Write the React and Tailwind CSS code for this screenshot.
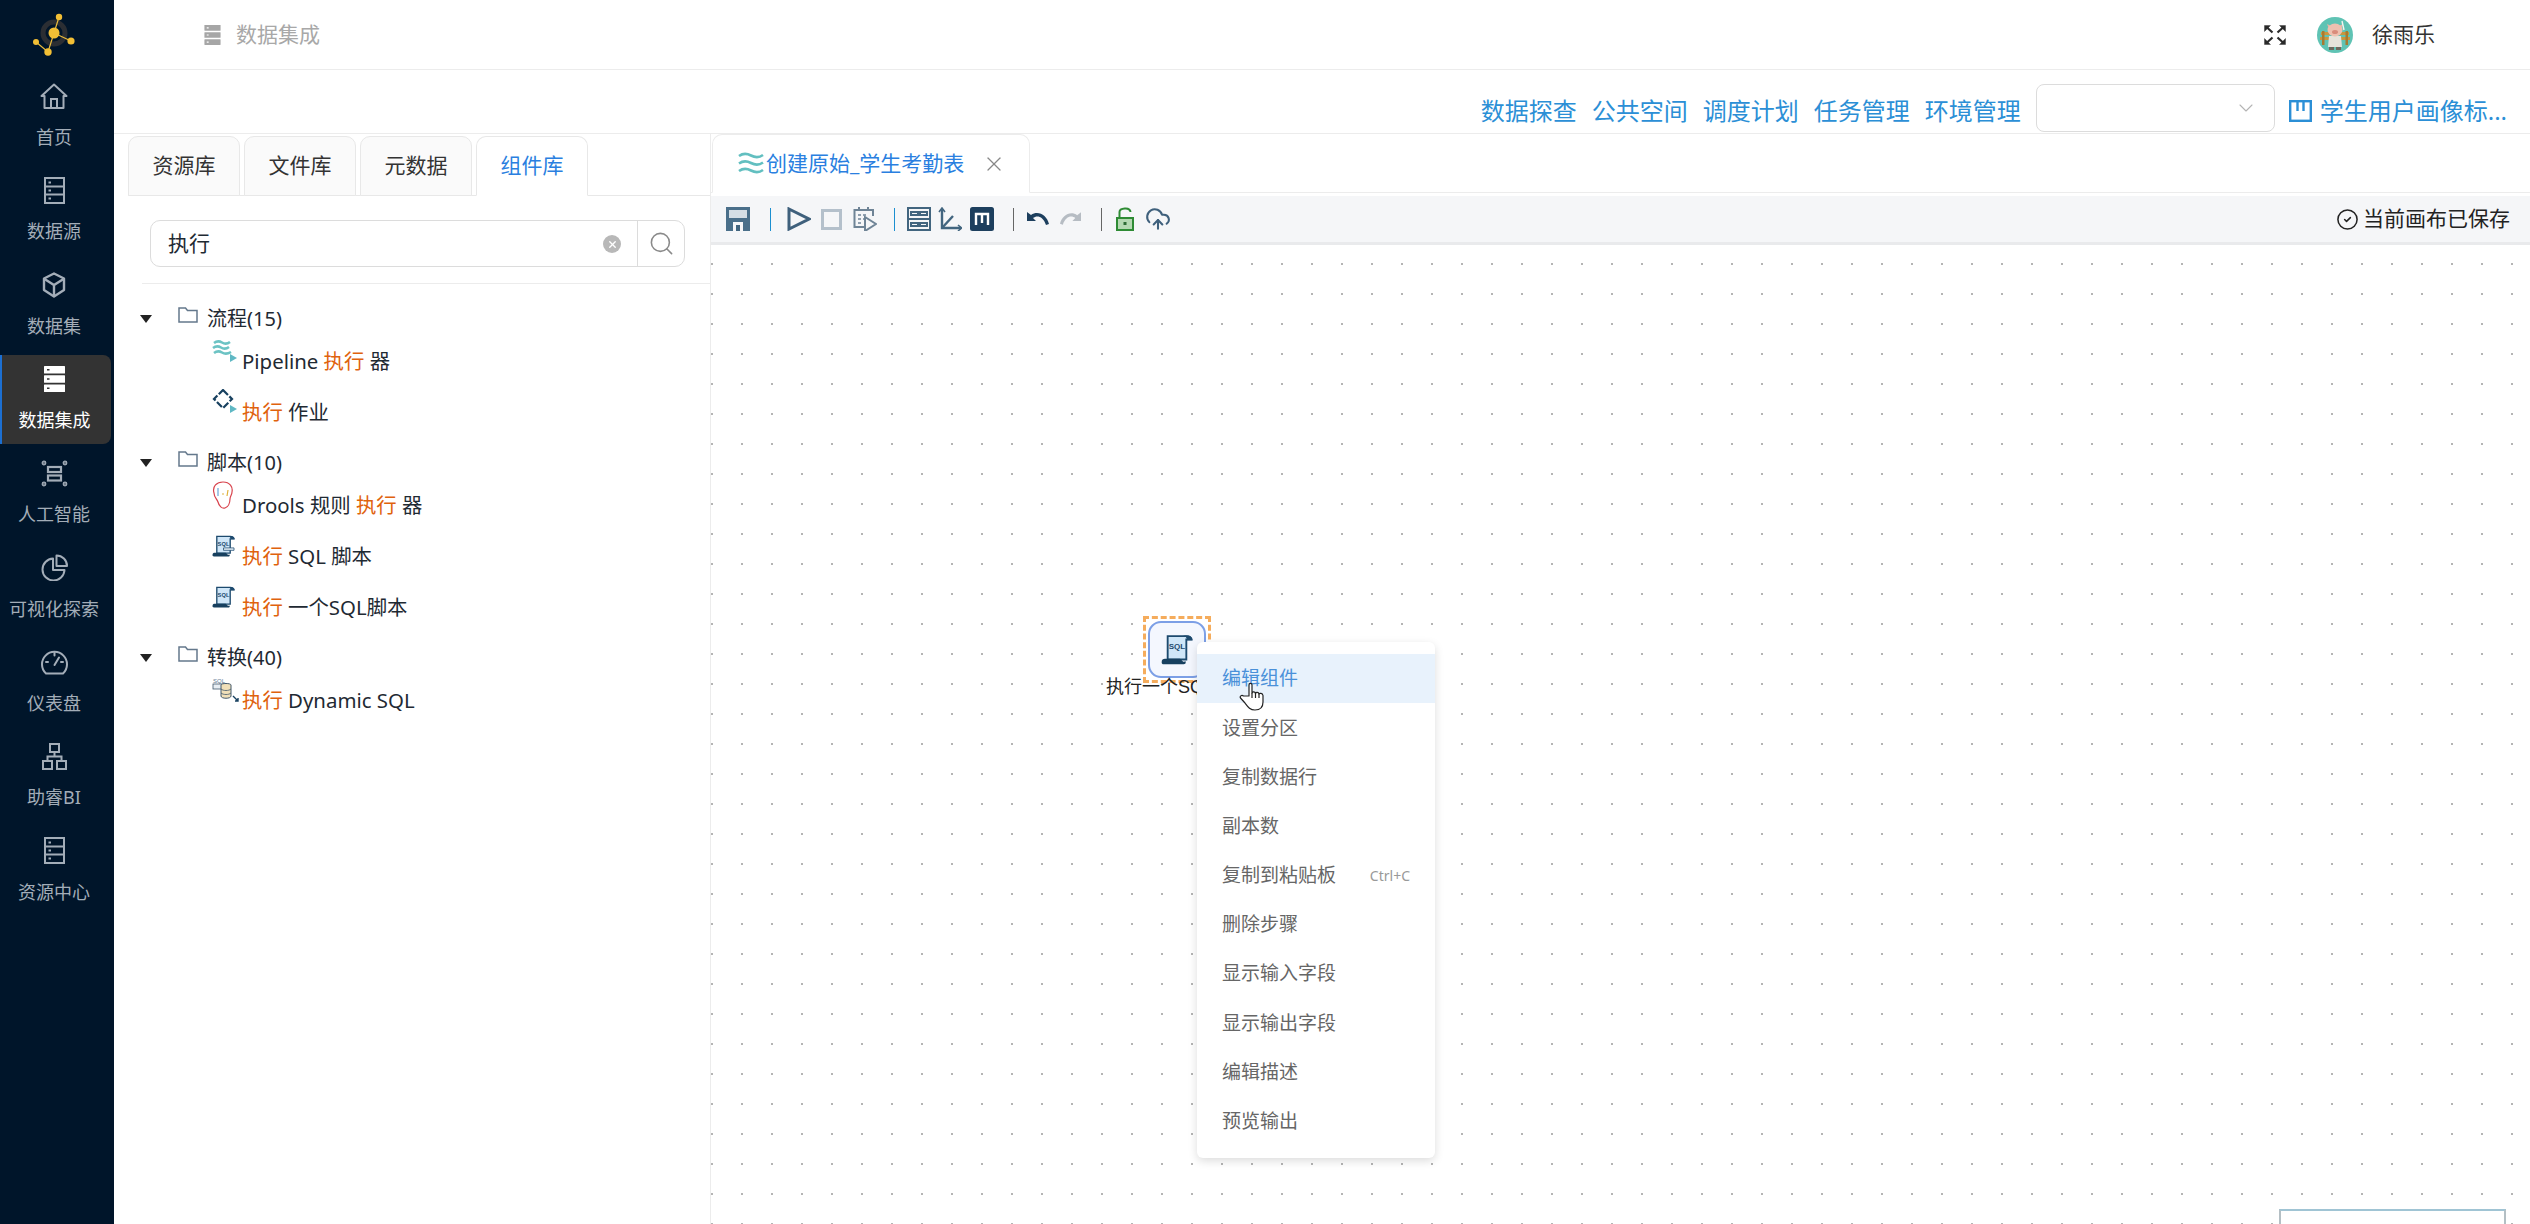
import React from "react";
import { ChevronDown, CircleCheck, CloudUpload, Search, X } from "lucide-react";

const FONT = "font-['Noto_Sans','Noto_Sans_CJK_SC',sans-serif]";

const Logo = () => (
  <svg width="50" height="50" viewBox="0 0 50 50">
    <circle cx="29" cy="24" r="11" fill="none" stroke="#2b2e33" strokeWidth="5" />
    <g stroke="#e9bb3c" strokeWidth="1.2">
      <path d="M29 24L34 8M29 24L46 32M29 24L23 43L11 33" fill="none" />
    </g>
    <g fill="#f2bf35">
      <circle cx="29" cy="24" r="5.5" />
      <circle cx="34" cy="8" r="3.2" />
      <circle cx="46" cy="32" r="3.6" />
      <circle cx="23" cy="43" r="3.7" />
      <circle cx="11" cy="33" r="3" />
    </g>
  </svg>
);

const HomeIcon = () => (
  <svg width="28" height="26" viewBox="0 0 28 26" fill="none" stroke="#a3adb8" strokeWidth="2">
    <path d="M1.5 13L14 1.5L26.5 13H23.5V25H4.5V13Z" strokeLinejoin="round" />
    <path d="M11 25V16H17V25" />
  </svg>
);

const DrawerIcon = () => (
  <svg width="21" height="27" viewBox="0 0 21 27" fill="none" stroke="#a3adb8" strokeWidth="2">
    <rect x="1" y="1" width="19" height="25" />
    <path d="M1 9.5H20M1 17.5H20" />
    <path d="M4.5 5.5H7M4.5 13.5H7M4.5 21.5H7" />
  </svg>
);

const CubeIcon = () => (
  <svg width="24" height="26" viewBox="0 0 24 26" fill="none" stroke="#a3adb8" strokeWidth="2.4">
    <path d="M12 1.5L22 6.5V18L12 24.5L2 18V6.5Z" strokeLinejoin="round" />
    <path d="M2.5 7L12 13L21.5 7M12 13V24" />
  </svg>
);

const ServerIcon = ({ width, height, fill, dot }) => (
  <svg width={width} height={height} viewBox="0 0 21 26">
    <rect x="0" y="0" width="21" height="7.4" rx="0.5" fill={fill} />
    <rect x="0" y="9.3" width="21" height="7.4" rx="0.5" fill={fill} />
    <rect x="0" y="18.6" width="21" height="7.4" rx="0.5" fill={fill} />
    <path d="M3 3.7H5.5M3 13H5.5M3 22.3H5.5" stroke={dot} strokeWidth="1.6" />
  </svg>
);

const AiIcon = () => (
  <svg width="27" height="27" viewBox="0 0 27 27" fill="none" stroke="#a3adb8" strokeWidth="2.2">
    <rect x="7" y="7" width="13" height="5" />
    <rect x="7" y="15.5" width="13" height="5" />
    <g strokeWidth="1.2" fill="#6f7b88">
      <circle cx="3" cy="3" r="1.8" />
      <circle cx="24" cy="3" r="1.8" />
      <circle cx="3" cy="24" r="1.8" />
      <circle cx="24" cy="24" r="1.8" />
    </g>
  </svg>
);

const PieIcon = () => (
  <svg width="27" height="27" viewBox="0 0 27 27" fill="none" stroke="#a3adb8" strokeWidth="2">
    <path d="M12 4.5A11 11 0 1 0 23.5 16H12Z" strokeLinejoin="round" />
    <path d="M15.5 1.5A10.5 10.5 0 0 1 26 12H15.5Z" strokeLinejoin="round" />
  </svg>
);

const GaugeIcon = () => (
  <svg width="27" height="26" viewBox="0 0 27 26" fill="none" stroke="#a3adb8" strokeWidth="2">
    <path d="M5 24.5A12.5 12.5 0 1 1 22 24.5Z" strokeLinejoin="round" />
    <path d="M13.5 16L18 8.5M13.5 4V6.5M5 13H7M20 13H22" strokeLinecap="round" />
  </svg>
);

const OrgIcon = () => (
  <svg width="25" height="27" viewBox="0 0 25 27" fill="none" stroke="#a3adb8" strokeWidth="2">
    <rect x="8" y="1" width="9" height="8" />
    <rect x="1" y="18" width="9" height="8" />
    <rect x="15" y="18" width="9" height="8" />
    <path d="M12.5 9V13.5M5.5 18V13.5H19.5V18" />
  </svg>
);

const menuItems = [
  { label: "首页", icon: <HomeIcon /> },
  { label: "数据源", icon: <DrawerIcon /> },
  { label: "数据集", icon: <CubeIcon /> },
  { label: "数据集成", icon: <ServerIcon width={21} height={26} fill="#fff" dot="#333" />, active: true },
  { label: "人工智能", icon: <AiIcon /> },
  { label: "可视化探索", icon: <PieIcon /> },
  { label: "仪表盘", icon: <GaugeIcon /> },
  { label: "助睿BI", icon: <OrgIcon /> },
  { label: "资源中心", icon: <DrawerIcon /> },
];

function Sidebar() {
  return (
    <aside className="flex w-[114px] shrink-0 flex-col bg-[#00152a]">
      <div className="flex h-[72px] items-start justify-center pr-[14px] pt-[9px]">
        <Logo />
      </div>
      <nav className="flex w-[111px] flex-col gap-[5.33px]">
        {menuItems.map((item) => (
          <div
            key={item.label}
            className={
              item.active
                ? "flex h-[89px] flex-col items-center rounded-r-lg border-l-2 border-[#1c6fd1] bg-[#333333] pr-[4px] text-white"
                : "flex h-[89px] flex-col items-center pr-[3px] text-[#a3adb8]"
            }
          >
            <div className="flex h-[48px] items-center justify-center">{item.icon}</div>
            <div className="text-[18px] leading-[34px]">{item.label}</div>
          </div>
        ))}
      </nav>
    </aside>
  );
}

const ExpandIcon = () => (
  <svg width="22" height="20" viewBox="0 0 22 20" fill="#2a2a2a" stroke="#2a2a2a" strokeWidth="2.2">
    <path d="M8.5 7.5L3 2.5M13.5 7.5L19 2.5M8.5 12.5L3 17.5M13.5 12.5L19 17.5" />
    <path d="M0.5 0.5H6.5L0.5 6.5ZM21.5 0.5H15.5L21.5 6.5ZM0.5 19.5H6.5L0.5 13.5ZM21.5 19.5H15.5L21.5 13.5Z" strokeWidth="0.4" />
  </svg>
);

const Avatar = () => (
  <svg width="36" height="36" viewBox="0 0 36 36">
    <circle cx="18" cy="18" r="18" fill="#5fc3b4" />
    <rect x="4" y="15" width="28" height="3" fill="#c8963f" />
    <rect x="3" y="20" width="30" height="3" fill="#c8963f" />
    <rect x="5" y="14" width="2.5" height="14" fill="#a87a30" />
    <rect x="28.5" y="14" width="2.5" height="14" fill="#a87a30" />
    <path d="M12 19H24L25 30H11Z" fill="#e6e4dc" />
    <path d="M12 30H17V33H12ZM19 30H24V33H19Z" fill="#6d6a60" />
    <path d="M10 7L14 9L12 12ZM26 7L22 9L24 12Z" fill="#e9b3a4" />
    <ellipse cx="18" cy="13" rx="7.5" ry="6.5" fill="#eec0b0" />
    <ellipse cx="18" cy="15" rx="3" ry="2" fill="#d98c7c" />
    <path d="M25 4L27 13" stroke="#f4f4f0" strokeWidth="1.4" />
  </svg>
);

function TopBar() {
  return (
    <header className="flex h-[70px] shrink-0 items-center border-b border-[#ececec] bg-white pl-[90px] pr-[95px]">
      <ServerIcon width={17} height={20} fill="#a6a6a6" dot="#fff" />
      <span className="ml-[15px] text-[21px] text-[#a8a8a8]">数据集成</span>
      <div className="ml-auto flex items-center">
        <ExpandIcon />
        <div className="ml-[31px]">
          <Avatar />
        </div>
        <span className="ml-[19px] text-[21px] text-[#333]">徐雨乐</span>
      </div>
    </header>
  );
}

const quickLinks = ["数据探查", "公共空间", "调度计划", "任务管理", "环境管理"];

function ActionBar() {
  return (
    <div className="flex h-[64px] shrink-0 items-start justify-end gap-[15px] border-b border-[#ececec] bg-white pr-[23px] pt-[14px] text-[24px] leading-[32px] text-[#2b8fd6]">
      {quickLinks.map((link) => (
        <span key={link} className="mt-[11px]">
          {link}
        </span>
      ))}
      <div className="flex h-[48px] w-[239px] items-center justify-end rounded-lg border border-[#dcdcdc] pr-[16px]">
        <ChevronDown size={24} strokeWidth={1.1} color="#b4b4b4" />
      </div>
      <div className="-ml-[1px] mt-[11px] flex items-center">
        <svg width="23" height="22" viewBox="0 0 23 22" fill="none" stroke="#2b8fd6" strokeWidth="2.4">
          <rect x="1.2" y="1.2" width="20.6" height="19.6" />
          <path d="M8.5 2V11M14.5 2V11" />
        </svg>
        <span className="ml-[8px]">学生用户画像标...</span>
      </div>
    </div>
  );
}

const Flag = ({ x, y }) => <path d={`M${x} ${y}L${x + 7} ${y + 4}L${x} ${y + 8}Z`} fill="#5fb8c4" />;

const WavesIcon = () => (
  <svg width="26" height="24" viewBox="0 0 26 24" fill="none">
    <g stroke="#6cc3c4" strokeWidth="2.6">
      <path d="M2 4Q6 1 10 3.5T18 3" />
      <path d="M1 9Q5 6 9 8.5T17 8" />
      <path d="M2 14Q6 11 10 13.5T19 13" />
    </g>
    <Flag x={18} y={15} />
  </svg>
);

const JobIcon = () => (
  <svg width="26" height="24" viewBox="0 0 26 24" fill="none">
    <path d="M11 1L20 10L11 19L2 10Z" stroke="#17405f" strokeWidth="2.2" strokeDasharray="7 2" />
    <Flag x={18} y={16} />
  </svg>
);

const DroolsIcon = () => (
  <svg width="22" height="29" viewBox="0 0 22 29" fill="none">
    <path d="M2 12C0 5 5 1 11 1C18 1 21 6 20 11C20 14 18 15 18 18C18 22 16 26 13 27C10 28 7 25 6 21C5 18 2 16 2 12Z" stroke="#d8424c" strokeWidth="1.2" />
    <path d="M6 7V15" stroke="#6aa6d8" strokeWidth="1.2" />
    <path d="M10 13H12M16 9L15 15" stroke="#e0b23c" strokeWidth="1.2" />
  </svg>
);

const ScriptIcon = ({ bar }) => (
  <svg width="100%" height="100%" viewBox="0 0 24 23">
    <path d="M5 1.5H19C21.5 1.5 23 3 23 4H19V19H5Z" fill="#cfe6f8" stroke="#1d4a6e" strokeWidth="1.4" />
    <path d="M16 1H20C22 1 23.5 2.5 23.5 4.5H19.5C19.5 2.5 18 1 16 1Z" fill="#1d4a6e" />
    <path d="M0.5 21C0.5 19 1.5 18.5 3 18.5H14C15 18.5 15.5 20 16.5 20.5C17.5 21 18.5 20.5 18.5 20V21.5C18.5 22 18 22.5 17 22.5H2C1 22.5 0.5 22 0.5 21Z" fill="#17405f" />
    <text x="12" y="11" textAnchor="middle" fontSize="6" fontWeight="700" fontFamily="Liberation Sans, sans-serif" fill="#1d4a6e">
      SQL
    </text>
    {bar && <path d="M12 13.5H23V16H12Z" fill="#e8f2fa" stroke="#1d4a6e" strokeWidth="0.8" />}
  </svg>
);

const DynamicIcon = () => (
  <svg width="28" height="26" viewBox="0 0 28 26" fill="none">
    <text x="1" y="6" fontSize="6" fontFamily="Liberation Sans, sans-serif" fill="#5e7a90">
      SQL
    </text>
    <rect x="1" y="7" width="12" height="5" fill="#e8eef3" stroke="#43586b" strokeWidth="0.8" />
    <path d="M9 8C9 6 19 6 19 8V19C19 22 9 22 9 19Z" fill="#f0dfb8" stroke="#43586b" strokeWidth="1" />
    <path d="M9 12C11 14 17 14 19 12M9 16C11 18 17 18 19 16" stroke="#43586b" strokeWidth="0.8" />
    <path d="M21 19L26 24M26 21V24H23" stroke="#17405f" strokeWidth="1.4" />
  </svg>
);

const tree = [
  {
    name: "流程(15)",
    children: [
      { icon: <WavesIcon />, top: "mt-[-5px]", parts: ["Pipeline ", "*执行", " 器"] },
      { icon: <JobIcon />, top: "mt-[-6px]", parts: ["*执行", " 作业"] },
    ],
  },
  {
    name: "脚本(10)",
    children: [
      { icon: <DroolsIcon />, top: "mt-[-5px]", parts: ["Drools 规则 ", "*执行", " 器"] },
      { icon: <div className="h-[22px] w-[23px]"><ScriptIcon bar /></div>, top: "mt-[-5px]", parts: ["*执行", " SQL 脚本"] },
      { icon: <div className="h-[22px] w-[23px]"><ScriptIcon /></div>, top: "mt-[-5px]", parts: ["*执行", " 一个SQL脚本"] },
    ],
  },
  {
    name: "转换(40)",
    children: [{ icon: <DynamicIcon />, top: "mt-[-5px]", parts: ["*执行", " Dynamic SQL"] }],
  },
];

const FolderIcon = () => (
  <svg width="20" height="16" viewBox="0 0 20 16" fill="none" stroke="#64788c" strokeWidth="1.5">
    <path d="M1 1H7.5L9.5 3.5H19V15H1Z" />
  </svg>
);

function Tree() {
  return (
    <div className="pl-[26px] pt-[14px] text-[20px] text-[#1f2a33]">
      {tree.map((group) => (
        <div key={group.name}>
          <div className="relative flex h-[42px] items-start">
            <svg width="12" height="8" viewBox="0 0 12 8" className="mt-[17px] shrink-0">
              <path d="M0 0H12L6 8Z" fill="#222" />
            </svg>
            <div className="ml-[26px] mt-[9px]">
              <FolderIcon />
            </div>
            <span className="ml-[9px] leading-[42px]">{group.name}</span>
          </div>
          {group.children.map((child) => (
            <div key={child.parts.join("")} className="flex h-[51px] items-start pl-[72px]">
              <div className={`flex h-[32px] w-[30px] shrink-0 items-center ${child.top}`}>{child.icon}</div>
              <span className="whitespace-pre text-[20.4px] leading-[42px]">
                {child.parts.map((part) =>
                  part.startsWith("*") ? (
                    <span key={part} className="text-[#e0620d]">
                      {part.slice(1)}
                    </span>
                  ) : (
                    <span key={part}>{part}</span>
                  )
                )}
              </span>
            </div>
          ))}
        </div>
      ))}
    </div>
  );
}

const libTabs = ["资源库", "文件库", "元数据", "组件库"];

function LeftPanel() {
  return (
    <section className="flex w-[597px] shrink-0 flex-col border-r border-[#ececec] bg-white">
      <div className="ml-[14px] flex h-[62px] items-end gap-[4px] border-b border-[#e8e8e8]">
        {libTabs.map((tab, index) => (
          <div
            key={tab}
            className={
              index === 3
                ? "-mb-px flex h-[60px] w-[112px] items-center justify-center rounded-t-[10px] border border-[#e8e8e8] border-b-white bg-white text-[21px] text-[#2a7fe0]"
                : "-mb-px flex h-[60px] w-[112px] items-center justify-center rounded-t-[10px] border border-[#e8e8e8] bg-[#fafafa] text-[21px] text-[#333]"
            }
          >
            {tab}
          </div>
        ))}
      </div>
      <div className="ml-[28px] border-b border-[#ececec] pb-[16px] pl-[8px] pr-[25px] pt-[24px]">
        <div className="flex h-[47px] rounded-[10px] border border-[#dcdcdc]">
          <span className="flex-1 pl-[17px] text-[21px] leading-[44px] text-[#1f2a33]">执行</span>
          <div className="mr-[16px] mt-[14px] flex h-[18px] w-[18px] items-center justify-center rounded-full bg-[#b8b8b8]">
            <X size={11} strokeWidth={3} color="#fff" />
          </div>
          <div className="flex w-[47px] items-center justify-center border-l border-[#dcdcdc]">
            <Search size={27} strokeWidth={1.4} color="#8a8a8a" />
          </div>
        </div>
      </div>
      <Tree />
    </section>
  );
}

const Sep = ({ className }) => <div className={`h-[23px] w-px ${className}`} />;

function Toolbar() {
  return (
    <div className="flex h-[49px] shrink-0 items-center border-b-[3px] border-[#e9eaec] bg-[#f5f6f8] pl-[15px]">
      <svg width="24" height="24" viewBox="0 0 24 24">
        <path d="M0 0H24V24H0Z" fill="#4a6f8a" />
        <path d="M3 3H21V11H3Z" fill="#d5dee5" />
        <path d="M7 15H17V24H7Z" fill="#f5f6f8" />
        <path d="M10 18H14V24H10Z" fill="#42657f" />
      </svg>
      <Sep className="ml-[20px] bg-[#1b8fd0]" />
      <svg width="24" height="24" viewBox="0 0 24 24" className="ml-[16px]" fill="none">
        <path d="M2 2L22 12L2 22Z" stroke="#3f607c" strokeWidth="3" />
      </svg>
      <svg width="21" height="21" viewBox="0 0 21 21" className="ml-[10px]" fill="none">
        <rect x="1.5" y="1.5" width="18" height="18" stroke="#b4c0cb" strokeWidth="3" />
      </svg>
      <svg width="24" height="24" viewBox="0 0 24 24" className="ml-[11px]" fill="none">
        <path d="M15 20H1.5V3H20V9" stroke="#6f8496" strokeWidth="2" />
        <path d="M6 0V4M15 0V4" stroke="#6f8496" strokeWidth="2" />
        <path d="M5 8H8M10 8H13M5 12H8M10 12H13M5 16H8" stroke="#6f8496" strokeWidth="1.6" />
        <path d="M12 10L23 17L12 24Z" fill="#f5f6f8" stroke="#6f8496" strokeWidth="2" />
      </svg>
      <Sep className="ml-[17px] bg-[#1b8fd0]" />
      <svg width="24" height="24" viewBox="0 0 24 24" className="ml-[12px]" fill="none" stroke="#42657f" strokeWidth="2">
        <rect x="1" y="1" width="22" height="22" />
        <path d="M1 12H23" />
        <rect x="4" y="5" width="7" height="3" />
        <rect x="13" y="5" width="7" height="3" />
        <rect x="4" y="16" width="7" height="3" />
        <rect x="13" y="16" width="7" height="3" />
      </svg>
      <svg width="24" height="24" viewBox="0 0 24 24" className="ml-[7px]" fill="none" stroke="#42657f" strokeWidth="2.4">
        <path d="M4 2V21H23" />
        <path d="M4 21L15 9" />
        <path d="M1 5L4 1L7 5M20 18L23.5 21L20 24" strokeWidth="1.6" />
      </svg>
      <svg width="24" height="24" viewBox="0 0 24 24" className="ml-[8px]">
        <rect width="24" height="24" rx="2.5" fill="#1d3f5e" />
        <path d="M6 18V7H18V18M12 7V16" fill="none" stroke="#fff" strokeWidth="2.4" />
      </svg>
      <Sep className="ml-[19px] bg-[#666]" />
      <svg width="22" height="14" viewBox="0 0 22 14" className="ml-[13px]">
        <path d="M0 0V9H9L6 6C10 3 16 4 19 13L22 12C20 3 11 -2 4 3Z" fill="#1d3f5e" />
      </svg>
      <svg width="21" height="14" viewBox="0 0 22 14" className="ml-[11px]">
        <path d="M22 0V9H13L16 6C12 3 6 4 3 13L0 12C2 3 11 -2 18 3Z" fill="#b6bcc3" />
      </svg>
      <Sep className="ml-[20px] bg-[#666]" />
      <svg width="18" height="24" viewBox="0 0 18 24" className="ml-[14px]" fill="none">
        <path d="M3.5 11V5C3.5 1 14 -0.5 14.5 5" stroke="#2e8b34" strokeWidth="2" />
        <rect x="1" y="11" width="16" height="12" fill="#b5d8b2" stroke="#2e8b34" strokeWidth="2" />
        <rect x="7.5" y="15" width="3" height="3" fill="#2e6b34" />
      </svg>
      <CloudUpload size={26} strokeWidth={1.9} color="#3f607c" className="ml-[11px]" />
      <div className="ml-auto mr-[20px] flex items-center text-[21px] text-[#222]">
        <CircleCheck size={23} strokeWidth={1.6} color="#222" />
        <span className="ml-[4px]">当前画布已保存</span>
      </div>
    </div>
  );
}

const contextMenu = [
  "编辑组件",
  "设置分区",
  "复制数据行",
  "副本数",
  "复制到粘贴板",
  "删除步骤",
  "显示输入字段",
  "显示输出字段",
  "编辑描述",
  "预览输出",
];

const HandCursor = () => (
  <svg width="26" height="29" viewBox="0 0 26 29" fill="#fff" stroke="#222" strokeWidth="1.2" strokeLinejoin="round">
    <path d="M10 14V3C10 0.8 13 0.8 13 3V11C13.5 9.5 16 9.5 16.5 11.5C17 10 19.5 10 20 12C20.5 11 23.5 11 24 13.5V20C24 25 21 28 16 28C11 28 9 25 6 21L1.5 16C0.5 14.5 2.5 12.5 4.5 14Z" />
    <path d="M13 11V16M16.5 11.5V16M20 12V16" fill="none" />
  </svg>
);

function Canvas() {
  return (
    <div className="relative flex-1 overflow-hidden bg-white bg-[radial-gradient(circle,#b4b4b4_1px,transparent_1.4px)] bg-[size:30px_30px] bg-[position:16px_4px]">
      {/* the step on the canvas, its label runs under the menu */}
      <div className="absolute left-[432px] top-[371px] h-[67px] w-[68px] border-[3px] border-dashed border-[#f5ac5c] p-[2px]">
        <div className="flex h-full w-full items-center justify-center rounded-[13px] border-2 border-[#7c9fe6] bg-[#f4f7fe]">
          <div className="h-[31px] w-[32px]">
            <ScriptIcon />
          </div>
        </div>
      </div>
      <div className="absolute left-[395px] top-[428px] whitespace-nowrap font-['Liberation_Sans','Noto_Sans_CJK_SC',sans-serif] text-[18px] leading-[28px] text-[#222]">
        执行一个SQL脚本
      </div>

      <div className="absolute left-[486px] top-[397px] w-[238px] rounded-[6px] bg-white py-[12px] text-[19px] text-[#666] shadow-[0_3px_10px_rgba(0,0,0,0.14)]">
        {contextMenu.map((item, index) => (
          <div
            key={item}
            className={
              index === 0
                ? "flex h-[49.2px] items-center justify-between bg-[#e8f2fc] pl-[25px] pr-[25px] text-[#4a90d9]"
                : "flex h-[49.2px] items-center justify-between pl-[25px] pr-[25px]"
            }
          >
            <span>{item}</span>
            {item === "复制到粘贴板" && <span className="text-[14px] text-[#999]">Ctrl+C</span>}
          </div>
        ))}
      </div>
      <div className="absolute left-[528px] top-[437px]">
        <HandCursor />
      </div>

      <div className="absolute bottom-0 right-[24px] h-[15px] w-[227px] border-l-2 border-r-2 border-t-2 border-[#b4bfc4] border-t-[#a0c4d4] bg-white" />
    </div>
  );
}

function EditorPanel() {
  return (
    <section className="flex min-w-0 flex-1 flex-col">
      <div className="flex h-[59px] shrink-0 items-end border-b border-[#ececec] pl-[1px]">
        <div className="-mb-px flex h-[59px] w-[318px] items-center rounded-t-[10px] border border-[#ececec] border-b-white bg-white pl-[25px] text-[21px] text-[#2a7fe0]">
          <svg width="26" height="23" viewBox="0 0 26 23" fill="none" stroke="#62bfc0" strokeWidth="2.6">
            <path d="M1 4Q6.5 0 13 3.5T25 3" />
            <path d="M1 11.5Q6.5 7.5 13 11T25 10.5" />
            <path d="M1 19Q6.5 15 13 18.5T25 18" />
          </svg>
          <span className="ml-[2px]">创建原始_学生考勤表</span>
          <X size={24} strokeWidth={1.3} color="#888" className="ml-[18px]" />
        </div>
      </div>
      <div className="h-[3px] shrink-0" />
      <Toolbar />
      <Canvas />
    </section>
  );
}

export default function App() {
  return (
    <div className={`flex h-[1224px] w-[2530px] overflow-hidden bg-white ${FONT}`}>
      <Sidebar />
      <div className="flex min-w-0 flex-1 flex-col">
        <TopBar />
        <ActionBar />
        <div className="flex min-h-0 flex-1">
          <LeftPanel />
          <EditorPanel />
        </div>
      </div>
    </div>
  );
}
